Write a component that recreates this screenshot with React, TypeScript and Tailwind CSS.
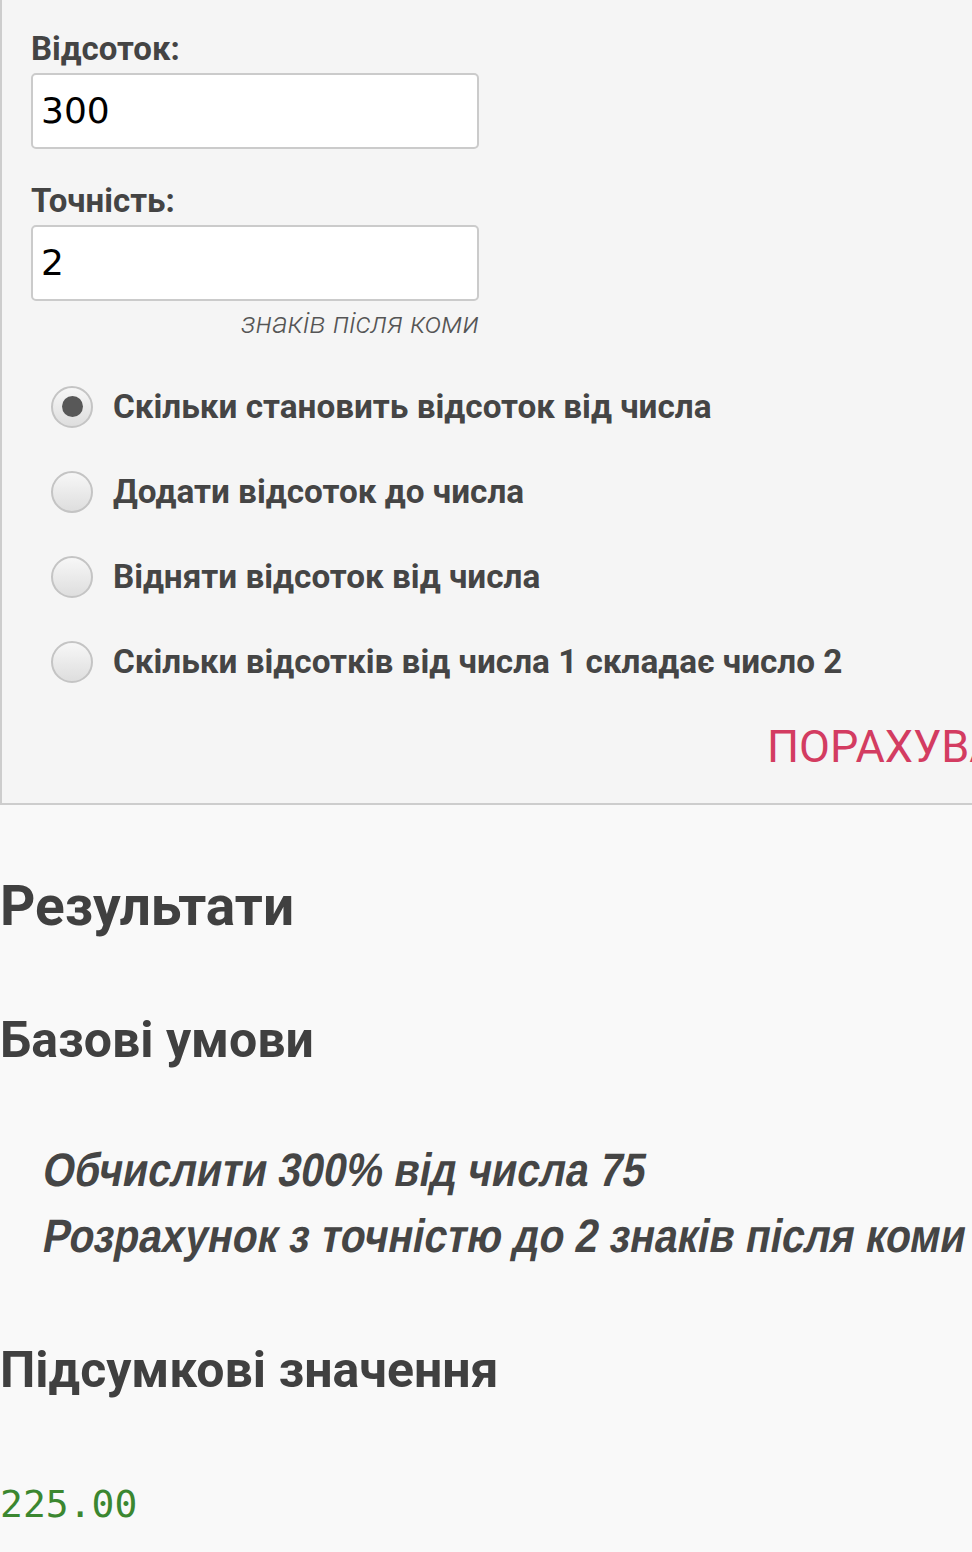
const options = [
  "Скільки становить відсоток від числа",
  "Додати відсоток до числа",
  "Відняти відсоток від числа",
  "Скільки відсотків від числа 1 складає число 2",
]

const conditions = ["Обчислити 300% від числа 75", "Розрахунок з точністю до 2 знаків після коми"]

function Radio({ checked }: { checked: boolean }) {
  return (
    <span className="flex h-[42px] w-[42px] shrink-0 items-center justify-center rounded-full border-2 border-[#c4c4c4] bg-gradient-to-b from-[#f7f7f7] to-[#dedede]">
      {checked && <span className="h-[21px] w-[21px] rounded-full bg-[#585858]" />}
    </span>
  )
}

export default function App() {
  const heading = "font-['Roboto',sans-serif] font-bold text-[#404040]"

  return (
    <div className="min-h-[1552px] w-[972px] overflow-hidden bg-[#f9f9f9] font-['Roboto',sans-serif] text-[#444]">
      <div className="w-[1200px] border-b-2 border-l-2 border-[#cdcdcd] bg-[#f5f5f5] pb-[30px] pl-[29px] pt-[29px]">
        <label className="mb-1 block text-[33px] font-bold leading-[40px]">Відсоток:</label>
        <div className="flex h-[76px] w-[448px] items-center rounded-[5px] border-2 border-[#cbcbcb] bg-white pl-[8px] font-['DejaVu_Sans',sans-serif] text-[36px] text-black">
          300
        </div>

        <label className="mb-1 mt-8 block text-[33px] font-bold leading-[40px]">Точність:</label>
        <div className="flex h-[76px] w-[448px] items-center rounded-[5px] border-2 border-[#cbcbcb] bg-white pl-[8px] font-['DejaVu_Sans',sans-serif] text-[36px] text-black">
          2
        </div>
        <div className="mt-[5px] w-[448px] text-right text-[30px] font-light italic leading-[34px] text-[#555]">
          знаків після коми
        </div>

        <div className="mt-6 flex flex-col">
          {options.map((o, i) => (
            <div key={o} className="ml-5 flex h-[85px] items-center gap-5">
              <Radio checked={i === 0} />
              <span className="text-[33.3px] font-bold leading-[32px] text-[#454545]">{o}</span>
            </div>
          ))}
        </div>

        <div className="ml-[736px] mt-[17px] text-[45px] leading-[52px] text-[#d33c61]">ПОРАХУВАТИ</div>
      </div>

      <h1 className={`${heading} mt-[74px] text-[55px] leading-[55px]`}>Результати</h1>
      <h2 className={`${heading} mt-[81px] text-[50px] leading-[50px]`}>Базові умови</h2>

      <div className="mt-[72px] whitespace-nowrap pl-[44px] font-['Liberation_Sans',sans-serif] text-[47px] font-bold leading-[66px] text-[#454545]">
        {conditions.map((c) => (
          <div key={c} className="origin-left -skew-x-12 scale-x-[0.87]">
            {c}
          </div>
        ))}
      </div>

      <h2 className={`${heading} mt-[76px] text-[50px] leading-[50px]`}>Підсумкові значення</h2>

      <div className="mt-[90px] font-['DejaVu_Sans_Mono',monospace] text-[38px] leading-[38px] text-[#3b8730]">225.00</div>
    </div>
  )
}
